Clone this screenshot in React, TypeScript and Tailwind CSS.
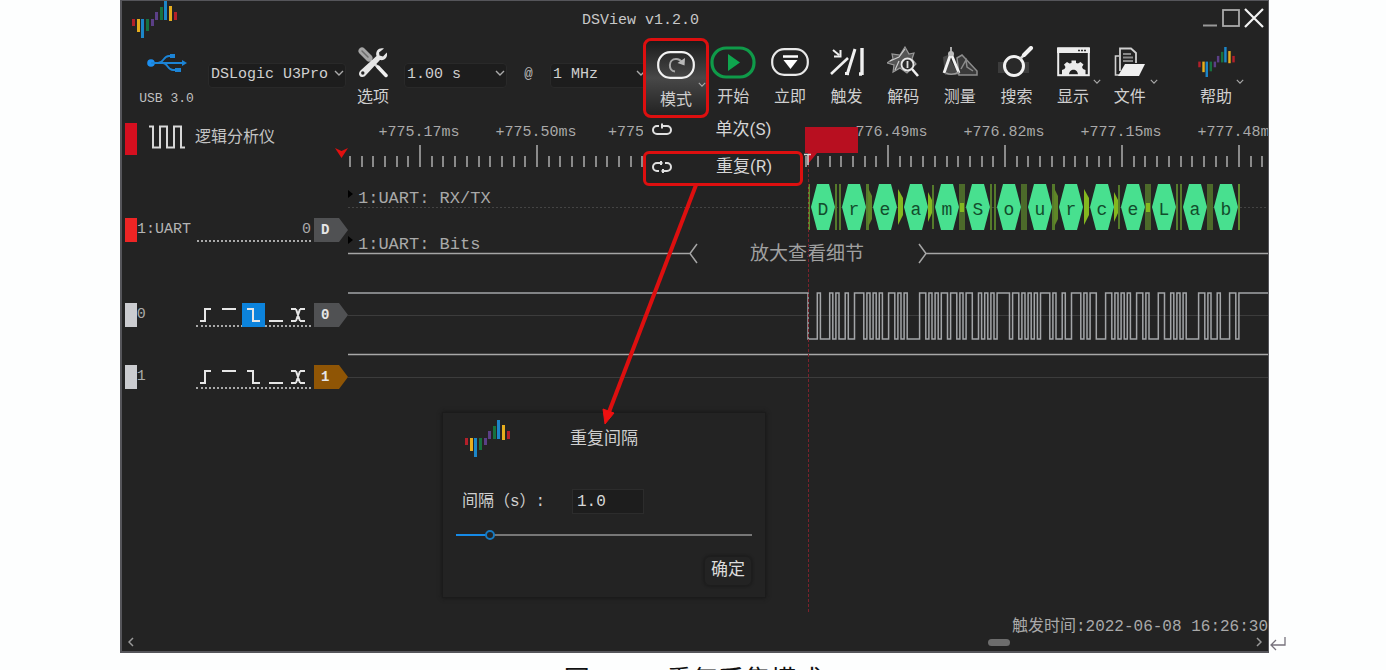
import React, { useState } from "react";

const MONO = "font-['Liberation_Mono','Noto_Sans_CJK_SC',monospace]";

function Logo({ className }: { className: string }) {
  const bars: [number, number, number, string][] = [
    [0, 18, 7, "#b3202a"],
    [5, 18, 13, "#e6ad1e"],
    [9, 18, 19, "#1c86c8"],
    [14, 18, 12, "#17713f"],
    [19, 18, 7, "#5b3f86"],
    [23, 11, 8, "#5b3f86"],
    [28, 6, 13, "#17713f"],
    [32, 0, 19, "#1c86c8"],
    [37, 5, 15, "#e6ad1e"],
    [42, 11, 8, "#b3202a"],
  ];
  return (
    <svg viewBox="0 0 45 37" className={className} aria-hidden="true">
      {bars.map(([x, y, h, c]) => (
        <rect key={x} x={x} y={y} width="3" height={h} fill={c} />
      ))}
    </svg>
  );
}

function Chevron({ className }: { className: string }) {
  return (
    <svg viewBox="0 0 10 6" className={className} fill="none" stroke="#aaa" strokeWidth="1.4" aria-hidden="true">
      <path d="M1 1 5 5 9 1" />
    </svg>
  );
}

function Picker({ label, value, className }: { label: string; value: string; className: string }) {
  return (
    <div className={`relative mt-6 h-[25px] shrink-0 ${className}`}>
      <select
        aria-label={label}
        className="h-full w-full appearance-none rounded-sm border border-[#292929] bg-[#1d1d1d] pl-0.5 text-[15px] text-[#d0d0d0]"
      >
        <option>{value}</option>
      </select>
      <Chevron className="pointer-events-none absolute top-2 right-0.5 h-1.5 w-2.5" />
    </div>
  );
}

function Tool({
  label,
  children,
  menu,
  className = "",
}: {
  label: string;
  children: React.ReactNode;
  menu?: boolean;
  className?: string;
}) {
  return (
    <button type="button" className={`relative flex h-full flex-col items-center pt-1.5 ${className}`}>
      <span className="flex h-9 items-center justify-center">{children}</span>
      <span className="mt-1.5 text-base leading-6 whitespace-nowrap text-[#cfcfcf]">{label}</span>
      {menu && <Chevron className="absolute top-[41px] right-0 h-[5px] w-2" />}
    </button>
  );
}

function UsbIcon() {
  return (
    <svg viewBox="0 0 40 20" className="h-5 w-10" fill="none" stroke="#1c84d6" strokeWidth="1.8" aria-hidden="true">
      <circle cx="4" cy="10" r="3.8" fill="#1c8ff0" stroke="none" />
      <path d="M4 10H35M11 10C17 10 16 3 22 3H25M16 10C21 10 20 17 26 17H29" />
      <path d="m35 7 5 3-5 3z" fill="#1c84d6" stroke="none" />
      <rect x="23" y="1" width="5" height="4" fill="#1c84d6" stroke="none" />
      <rect x="28" y="15" width="6" height="4" fill="#1c84d6" stroke="none" />
    </svg>
  );
}

function ToolsIcon() {
  return (
    <svg viewBox="0 0 30 31" className="h-[31px] w-[30px]" aria-hidden="true">
      <path d="M4 4 11 11" stroke="#a5a5a5" strokeWidth="7" strokeLinecap="round" />
      <path d="M4 4 10 10" stroke="#6d6d6d" strokeWidth="1.5" strokeLinecap="round" />
      <path d="M13 14 21 21" stroke="#d4d4d4" strokeWidth="2.5" />
      <path d="M20 20 28 28.500" stroke="#f0f0f0" strokeWidth="3.500" strokeLinecap="round" />
      <path
        d="M26 1.500C21 0 17 4 18.500 9L2.500 23.500C0 26 1 29 3 29.800 5 30.500 7 29.500 8 28L22 13C27 14 30 10 28.800 5.500L25 9.500 21.500 8.500 21 5.500Z"
        fill="#e6e6e6"
      />
      <circle cx="4.800" cy="26" r="1.700" fill="#232323" />
    </svg>
  );
}

function LoopPill() {
  return (
    <svg viewBox="0 0 38 28" className="h-7 w-[38px]" fill="none" aria-hidden="true">
      <rect x="1.200" y="1.200" width="35.600" height="25.600" rx="12" stroke="#f2f2f2" strokeWidth="2.200" />
      <path d="M18 20.500C11 20 11 8 19 8c3 0 5 1.500 6.500 4" stroke="#a8a8a8" strokeWidth="2" />
      <path d="m28 7-.5 7.500-7-2.500z" fill="#b8b8b8" />
    </svg>
  );
}

function StartIcon() {
  return (
    <svg viewBox="0 0 46 33" className="h-[33px] w-[46px]" fill="none" aria-hidden="true">
      <rect x="2" y="2" width="42" height="29" rx="14" stroke="#0f9a49" strokeWidth="3.200" />
      <path d="M18 8 30 16.500 18 25Z" fill="#0fa54e" />
    </svg>
  );
}

function InstantIcon() {
  return (
    <svg viewBox="0 0 38 28" className="h-7 w-[38px]" fill="none" aria-hidden="true">
      <rect x="1.200" y="1.200" width="35.600" height="25.600" rx="12" stroke="#e8e8e8" strokeWidth="2.200" />
      <path d="M12 8.500H27" stroke="#fff" strokeWidth="2.500" />
      <path d="M12.500 12H26.500L19.500 21Z" fill="#fff" />
    </svg>
  );
}

function TriggerIcon() {
  return (
    <svg viewBox="0 0 34 28" className="h-7 w-[34px]" fill="none" stroke="#f0f0f0" aria-hidden="true">
      <path d="M3 2 9 7M10.500 2V8.500H4" strokeWidth="2" />
      <path d="M1 26 18 10" strokeWidth="2.600" />
      <path d="M17 27 25 1M15 25.500H19" strokeWidth="3" />
      <path d="M32 0V27M29 26H32" strokeWidth="3.400" />
    </svg>
  );
}

function DecodeIcon() {
  return (
    <svg viewBox="0 0 32 32" className="h-8 w-8" fill="none" aria-hidden="true">
      <path d="M18 1 22 8 27 7 25 13 29 18 20 27 13 22 6 26 7 19 0 17 6 13 5 8 13 9Z" fill="#555" stroke="#999" strokeWidth="1.200" />
      <path d="m3 15 9-4 6-8M8 24 12 15" stroke="#ccc" strokeWidth="1.200" />
      <circle cx="20.500" cy="18.500" r="6" fill="#2b2b2b" stroke="#e8e8e8" strokeWidth="1.800" />
      <path d="M20.500 15V22" stroke="#ddd" strokeWidth="1.800" />
      <path d="m25 23 6 7" stroke="#f0f0f0" strokeWidth="2.600" />
    </svg>
  );
}

function MeasureIcon() {
  return (
    <svg viewBox="0 0 36 30" className="h-[30px] w-9" fill="none" aria-hidden="true">
      <path d="M1 10 6 8 17 28H3Z" fill="#484848" />
      <path d="M15 11 20 8 35 24V28H17Z" fill="#3a3a3a" stroke="#8c8c8c" strokeWidth="1.500" />
      <path d="M19 22 24 13 25 20 31 24" stroke="#8c8c8c" strokeWidth="1.500" />
      <path d="M9 0V6" stroke="#ccc" strokeWidth="1.600" />
      <circle cx="9" cy="7" r="3" fill="#bbb" />
      <path d="M8 9 2 26M10 9 17 26" stroke="#f2f2f2" strokeWidth="2.800" />
      <path d="M4 26Q10 29 17 25" stroke="#999" strokeWidth="1.500" />
    </svg>
  );
}

function SearchIcon() {
  return (
    <svg viewBox="0 0 36 32" className="h-8 w-9" fill="none" aria-hidden="true">
      <rect x="0" y="16" width="31" height="11" fill="#3c3c3c" />
      <circle cx="16" cy="20" r="9.500" fill="#292929" stroke="#f2f2f2" strokeWidth="3" />
      <path d="m22 13 4-4" stroke="#ddd" strokeWidth="2.500" />
      <path d="m26 9 7-7" stroke="#f2f2f2" strokeWidth="4" strokeLinecap="round" />
    </svg>
  );
}

function DisplayIcon() {
  return (
    <svg viewBox="0 0 33 30" className="h-[30px] w-[33px]" fill="none" aria-hidden="true">
      <rect x="1.200" y="1.200" width="30.600" height="27" stroke="#ececec" strokeWidth="2" />
      <path d="M0 1H33V6H0Z" fill="#ececec" />
      <path d="M21 3.500H30" stroke="#333" strokeWidth="1.500" strokeDasharray="2 1" />
      <path
        d="M5 28V23L7.500 22 8.500 20 7 17.500 10 15 12.500 16.500 14.500 16V13.500H19V16L21 16.500 23.500 15 26.500 17.500 25 20 26 22 28.500 23V28H21C21 21 12 21 12 28Z"
        fill="#ececec"
      />
    </svg>
  );
}

function FileIcon() {
  return (
    <svg viewBox="0 0 32 30" className="h-[30px] w-8" fill="none" aria-hidden="true">
      <path d="M5 9H1.500V28H5" stroke="#d0d0d0" strokeWidth="1.600" />
      <path d="M6 24V1.500H17L22 6V16" stroke="#d0d0d0" strokeWidth="1.800" />
      <path d="M9 7H17M9 10.500H19M9 14H19" stroke="#888" strokeWidth="2" />
      <path d="M11 17H31L25 29H4Z" fill="#f0f0f0" />
    </svg>
  );
}

function RunOnceIcon({ repeat }: { repeat?: boolean }) {
  return (
    <svg viewBox="0 0 20 14" className="h-3.5 w-5" fill="none" stroke="#e0e0e0" strokeWidth="2" aria-hidden="true">
      {repeat ? (
        <path d="M8 3H5a4 4 0 0 0 0 8h2M12 11h3a4 4 0 0 0 0-8h-2M8 3h2.500M9.500 11H12M9 1v4M11 9v4" />
      ) : (
        <path d="M7 3H5a4 4 0 0 0 0 8h10a4 4 0 0 0 0-8H10M10 0.500v5" />
      )}
    </svg>
  );
}

/* ---------- traces ---------- */

const MESSAGE = "DreamSourceLab";
const START_X = 460;
const FRAME = 31;
const BIT = FRAME / 10;

function uartPath(high: number, low: number) {
  let d = `M0 ${high}H${START_X}`;
  let level = 1;
  MESSAGE.split("").forEach((ch, i) => {
    const code = ch.charCodeAt(0);
    const bits = [0];
    for (let b = 0; b < 8; b++) bits.push((code >> b) & 1);
    bits.push(1);
    bits.forEach((bit, b) => {
      if (bit !== level) {
        d += `H${(START_X + i * FRAME + b * BIT).toFixed(1)}V${bit ? high : low}`;
        level = bit;
      }
    });
  });
  return `${d}H4000`;
}

function Ruler() {
  const labels: [number, string][] = [
    [0, "+775.17ms"],
    [1, "+775.50ms"],
    [4, "+776.49ms"],
    [5, "+776.82ms"],
    [6, "+777.15ms"],
    [7, "+777.48ms"],
  ];
  const ticks = Array.from({ length: 180 }, (_, i) => i - 6);
  return (
    <svg className="h-full w-full" aria-label="time ruler">
      {labels.map(([i, t]) => (
        <text key={t} x={71 + i * 117} y="18" textAnchor="middle" fontSize="15" fill="#a9a9a9">
          {t}
        </text>
      ))}
      <text x="260" y="18" fontSize="15" fill="#a9a9a9">+775</text>
      {ticks.map((k) => (
        <rect key={k} x={Math.round(71 + k * 11.7)} y={k % 10 === 0 ? 27 : 38} width="2" height={k % 10 === 0 ? 22 : 11} fill="#8b8b8b" />
      ))}
    </svg>
  );
}

type Gap = "bars" | "block" | "taper" | "taperBar" | "barTaper" | "lit";
const GAPS: Gap[] = ["bars", "barTaper", "taper", "taperBar", "lit", "bars", "block", "barTaper", "taper", "taperBar", "lit", "bars", "block"];

function GapMark({ kind, x }: { kind: Gap; x: number }) {
  switch (kind) {
    case "bars":
      return <path d={`M${x} 6h2v46h-2zM${x + 4} 6h2v46h-2z`} fill="#557a2b" />;
    case "block":
      return <rect x={x} y="6" width="6" height="46" fill="#4c6a2a" />;
    case "taper":
      return <path d={`M${x + 1} 11 ${x + 6} 20V37L${x + 1} 47Z`} fill="#84b81f" />;
    case "taperBar":
      return (
        <g>
          <path d={`M${x} 14 ${x + 4} 22V35L${x} 44Z`} fill="#84b81f" />
          <rect x={x + 4} y="7" width="2" height="44" fill="#557a2b" />
        </g>
      );
    case "barTaper":
      return (
        <g>
          <rect x={x} y="6" width="3" height="46" fill="#557a2b" />
          <path d={`M${x + 2} 10 ${x + 6} 18V41L${x + 2} 49Z`} fill="#5f8527" />
        </g>
      );
    case "lit":
      return (
        <g>
          <rect x={x} y="6" width="6" height="46" fill="#4c6a2a" />
          <rect x={x + 1} y="25" width="4" height="9" fill="#84b81f" />
        </g>
      );
  }
}

function DecoderTrace() {
  return (
    <svg className="h-full w-full" aria-label="UART decoder">
      <path d="M0 12 5 16 0 20ZM0 58 5 62 0 66Z" fill="#000" />
      <line x1="0" x2="100%" y1="29.500" y2="29.500" stroke="#444" strokeDasharray="2 2" />
      <text x="10" y="25" fontSize="17" fill="#a9a9a9">1:UART: RX/TX</text>
      <text x="10" y="71" fontSize="17" fill="#a9a9a9">1:UART: Bits</text>
      <path d="M0 75.500H342M349 66 342 75.500 349 85M571 66 578 75.500 571 85M578 75.500H4000" fill="none" stroke="#a5a5a5" strokeWidth="1.500" />
      <text x="459" y="82" fontSize="19" textAnchor="middle" fill="#a0a0a0">放大查看细节</text>
      <rect x="460" y="6" width="2" height="46" fill="#5f8a2e" />
      {MESSAGE.split("").map((ch, i) => {
        const c = 475 + i * FRAME;
        return (
          <g key={i}>
            <path d={`M${c - 12} 29 ${c - 6} 6H${c + 6}L${c + 12} 29 ${c + 6} 52H${c - 6}Z`} fill="#48e08f" />
            {i < GAPS.length ? <GapMark kind={GAPS[i]} x={c + 12} /> : <rect x={c + 12} y="6" width="2" height="46" fill="#5f8a2e" />}
            <text x={c} y="37" fontSize="18" textAnchor="middle" fill="#124d2c" className="font-['Liberation_Mono',monospace]">
              {ch}
            </text>
          </g>
        );
      })}
    </svg>
  );
}

function Tag({ text, color }: { text: string; color: string }) {
  return (
    <span className="relative flex h-6 w-[34px] shrink-0 items-center pl-[7px]">
      <svg viewBox="0 0 34 24" className="absolute inset-0 h-6 w-[34px]" aria-hidden="true">
        <path d="M0 0H25L34 12 25 24H0Z" fill={color} />
      </svg>
      <span className="relative text-sm font-bold text-[#e6e6e6]">{text}</span>
    </span>
  );
}

const EDGES: [string, string][] = [
  ["上升沿", "M4 18H9V6H15"],
  ["高电平", "M3 6H17"],
  ["下降沿", "M5 6H11V18H18"],
  ["低电平", "M4 18H18"],
  ["双边沿", "M3 6H8M12 6H17M3 18H8M12 18H17M8 6 12 18M12 6 8 18"],
];

function ChannelHead({ name, tag, color, initial }: { name: string; tag: string; color: string; initial: number }) {
  const [active, setActive] = useState(initial);
  return (
    <div className="flex w-[226px] shrink-0 items-center pl-[3px]">
      <span className="h-6 w-3 bg-[#cbccd0]" />
      <span className="w-[60px] text-[15px] text-[#a9a9a9]">{name}</span>
      <div className="mr-[3px] flex h-6 w-[115px] border-b-2 border-dotted border-[#a9a9a9]">
        {EDGES.map(([label, d], i) => (
          <button
            key={label}
            type="button"
            aria-label={label}
            onClick={() => setActive(i)}
            className={`h-6 w-[23px] ${active === i ? "bg-[#0c83dc]" : ""}`}
          >
            <svg viewBox="0 0 23 24" className="h-6 w-[23px]" fill="none" stroke="#e6e6e6" strokeWidth="2">
              <path d={d} />
            </svg>
          </button>
        ))}
      </div>
      <Tag text={tag} color={color} />
    </div>
  );
}

function RepeatDialog() {
  const [value, setValue] = useState("1.0");
  return (
    <section
      aria-label="重复间隔"
      className="absolute top-[294px] left-80 flex h-[186px] w-[324px] flex-col border border-[#1b1b1b] bg-[#232323] px-[13px] shadow-[0_0_4px_#161616]"
    >
      <header className="flex h-[58px] pt-[7px] pl-[9px]">
        <Logo className="h-[37px] w-[45px]" />
        <h2 className="ml-[60px] pt-2 text-[17px] leading-6 text-[#cfcfcf]">重复间隔</h2>
      </header>
      <div className="mt-[17px] flex items-center pl-1.5">
        <label htmlFor="interval" className="w-[110px] pt-0.5 text-base whitespace-nowrap text-[#cfcfcf]">
          间隔（s）:
        </label>
        <input
          id="interval"
          value={value}
          onChange={(e) => setValue(e.target.value)}
          className="h-[25px] w-[72px] border border-[#2c2c2c] bg-[#1d1d1d] px-1 pt-0.5 text-base text-[#d8d8d8]"
        />
      </div>
      <input
        type="range"
        aria-label="间隔"
        min="0"
        max="10"
        step="0.1"
        value={Number(value) || 0}
        onChange={(e) => setValue(Number(e.target.value).toFixed(1))}
        className="mt-5 h-0.5 w-full appearance-none bg-[linear-gradient(to_right,#168ae6_11%,#777_11%)] [&::-webkit-slider-thumb]:h-2.5 [&::-webkit-slider-thumb]:w-2.5 [&::-webkit-slider-thumb]:appearance-none [&::-webkit-slider-thumb]:rounded-full [&::-webkit-slider-thumb]:border-2 [&::-webkit-slider-thumb]:border-[#1779c0] [&::-webkit-slider-thumb]:bg-[#232323]"
      />
      <button
        type="button"
        className="mt-5 ml-auto h-[30px] w-[48px] rounded-md border border-[#1d1d1d] text-[17px] leading-6 text-[#dcdcdc] shadow-[0_0_3px_#151515]"
      >
        确定
      </button>
    </section>
  );
}

function ModeMenu() {
  return (
    <ul className="absolute top-full left-0 z-10 flex w-[160px] flex-col bg-[#232323] text-[17px] text-[#d6d6d6]">
      <li className="flex h-[33px] items-center">
        <button type="button" className="flex h-full w-full items-center pb-[9px] pl-[9px]">
          <RunOnceIcon />
          <span className="flex-1 pl-3 text-center font-['Roboto','Noto_Sans_CJK_SC',sans-serif]">单次(S)</span>
        </button>
      </li>
      <li className="h-[35px] rounded-md border-3 border-[#dd0f0f]">
        <button type="button" className="flex h-full w-full items-center pb-1 pl-1.5">
          <RunOnceIcon repeat />
          <span className="flex-1 pl-4 text-center font-['Roboto','Noto_Sans_CJK_SC',sans-serif]">重复(R)</span>
        </button>
      </li>
    </ul>
  );
}

export default function App() {
  return (
    <div className={`flex h-screen flex-col overflow-hidden bg-[#fdfefe] ${MONO}`}>
      <div className="flex min-h-0 flex-1">
        <div className="w-[120px] shrink-0" />
        <main className="relative flex min-w-0 flex-1 flex-col border-t border-r border-b-2 border-l-2 border-[#55555a] bg-[#232323]">
          <header className="flex h-[37px] shrink-0">
            <Logo className="ml-2.5 h-[37px] w-[45px]" />
            <h1 className="flex-1 pt-2 pr-[98px] text-center text-[15px] leading-6 text-[#c8c8c8]">DSView v1.2.0</h1>
            <div className="flex w-[66px] items-start gap-1 pt-[7px]">
              <button type="button" aria-label="最小化">
                <svg viewBox="0 0 16 20" className="h-5 w-4"><path d="M1 17.500H15" stroke="#999" strokeWidth="2" /></svg>
              </button>
              <button type="button" aria-label="最大化">
                <svg viewBox="0 0 18 20" className="h-5 w-[18px]"><rect x="1" y="2" width="16" height="16" fill="none" stroke="#aaa" strokeWidth="1.800" /></svg>
              </button>
              <button type="button" aria-label="关闭">
                <svg viewBox="0 0 20 20" className="h-5 w-5"><path d="M1 1 19 19M19 1 1 19" stroke="#f4f4f4" strokeWidth="2.200" /></svg>
              </button>
            </div>
          </header>

          <nav className="relative z-10 flex h-20 shrink-0">
            <div className="mr-[5px] ml-2 flex w-[73px] shrink-0 flex-col items-center pt-[15px]">
              <UsbIcon />
              <span className="mt-3.5 text-[13px] leading-6 text-[#c0c0c0]">USB 3.0</span>
            </div>
            <Picker label="设备" value="DSLogic U3Pro" className="w-[138px]" />
            <Tool label="选项" className="mx-[3px] w-12 shrink-0">
              <ToolsIcon />
            </Tool>
            <Picker label="采样时长" value="1.00 s" className="ml-1 w-[103px]" />
            <span className="w-[43px] shrink-0 pt-[26px] text-center text-sm text-[#b8b8b8]">@</span>
            <Picker label="采样频率" value="1 MHz" className="w-[98px]" />
            <div className="relative -ml-[5px] w-[66px] shrink-0">
              <Tool
                label="模式"
                menu
                className="w-full rounded-lg border-3 border-[#dd0f0f] bg-linear-to-b from-[#1c1c1c] via-[#484848] to-[#232323]"
              >
                <LoopPill />
              </Tool>
              <ModeMenu />
            </div>
            <div className="-ml-1 grid w-[453px] shrink-0 grid-cols-8">
              <Tool label="开始"><StartIcon /></Tool>
              <Tool label="立即"><InstantIcon /></Tool>
              <Tool label="触发"><TriggerIcon /></Tool>
              <Tool label="解码"><DecodeIcon /></Tool>
              <Tool label="测量"><MeasureIcon /></Tool>
              <Tool label="搜索"><SearchIcon /></Tool>
              <Tool label="显示" menu><DisplayIcon /></Tool>
              <Tool label="文件" menu><FileIcon /></Tool>
            </div>
            <Tool label="帮助" menu className="mr-6 ml-auto w-14">
              <Logo className="h-[30px] w-[37px]" />
            </Tool>
          </nav>

          <div className="relative flex min-h-0 flex-1 flex-col">
            <div className="flex h-[60px] shrink-0">
              <div className="relative flex w-[226px] shrink-0 items-start pl-[3px]">
                <span className="mt-[5px] h-8 w-3 bg-[#d50f1f]" />
                <svg viewBox="0 0 36 24" className="mt-[7px] ml-3 h-6 w-9" fill="none" stroke="#d8d8d8" strokeWidth="2" aria-hidden="true">
                  <path d="M0 1.500H4V22.500H11V1.500H18V22.500H25V1.500H32V22.500H36" />
                </svg>
                <span className="mt-2 ml-2.5 text-base leading-6 text-[#c4c4c4]">逻辑分析仪</span>
                <svg viewBox="0 0 13 10" className="absolute right-0 bottom-5 h-2.5 w-[13px]" aria-hidden="true">
                  <path d="M0 0 6.500 3 13 0 6.500 10Z" fill="#e01010" />
                </svg>
              </div>
              <div className="min-w-0 flex-1"><Ruler /></div>
            </div>

            <div className="flex h-[104px] shrink-0">
              <div className="flex w-[226px] shrink-0 items-center pl-[3px]">
                <span className="h-6 w-3 bg-[#ee2525]" />
                <span className="w-[60px] text-[15px] text-[#b4b4b4]">1:UART</span>
                <span className="mr-[3px] h-6 w-[115px] border-b-2 border-dotted border-[#a9a9a9] text-right text-[15px] leading-6 text-[#a9a9a9]">0</span>
                <Tag text="D" color="#505153" />
              </div>
              <div className="min-w-0 flex-1"><DecoderTrace /></div>
            </div>

            <div className="flex h-[66px] shrink-0">
              <ChannelHead name="0" tag="0" color="#505153" initial={2} />
              <div className="min-w-0 flex-1">
                <svg className="h-full w-full" aria-label="channel 0">
                  <line x1="0" x2="100%" y1="33.500" y2="33.500" stroke="#3c3c3c" />
                  <path d={uartPath(11, 57)} fill="none" stroke="#a3a5a8" strokeWidth="1.500" />
                </svg>
              </div>
            </div>

            <div className="flex h-[58px] shrink-0">
              <ChannelHead name="1" tag="1" color="#8f5505" initial={-1} />
              <div className="min-w-0 flex-1">
                <svg className="h-full w-full" aria-label="channel 1">
                  <line x1="0" x2="100%" y1="6.500" y2="6.500" stroke="#a8a8a8" strokeWidth="1.500" />
                  <line x1="0" x2="100%" y1="29.500" y2="29.500" stroke="#3c3c3c" />
                </svg>
              </div>
            </div>

            <p className="mt-auto shrink-0 text-right text-base leading-3 text-[#a9a9a9]">触发时间:2022-06-08 16:26:30</p>

            <svg className="pointer-events-none absolute top-0 left-[680px] h-[496px] w-16" aria-hidden="true">
              <line x1="6.500" x2="6.500" y1="36" y2="496" stroke="#7c222c" strokeDasharray="3 2" />
              <rect x="3" y="9" width="53" height="26" fill="#b80f20" />
              <path d="M6 46V35H15Z" fill="#c01020" />
              <path d="M2 36.500H9M6 37V47" stroke="#d8d8d8" strokeWidth="1.500" fill="none" />
            </svg>

            <RepeatDialog />
          </div>

          <footer className="flex h-[18px] shrink-0 items-center px-1.5">
            <svg viewBox="0 0 6 10" className="h-2.5 w-1.5" fill="none" stroke="#999" strokeWidth="1.500"><path d="M5 1 1 5 5 9" /></svg>
            <div className="mx-2 flex-1 pr-[238px]">
              <div className="ml-auto h-[7px] w-[22px] rounded-full bg-[#6d6d6d]" />
            </div>
            <svg viewBox="0 0 6 10" className="h-2.5 w-1.5" fill="none" stroke="#999" strokeWidth="1.500"><path d="M1 1 5 5 1 9" /></svg>
          </footer>

          <svg className="pointer-events-none absolute top-0 left-0 z-20 h-[430px] w-[640px]" aria-hidden="true">
            <path d="M574 184 487 411" stroke="#dd0f0f" strokeWidth="4" />
            <path d="M483 423 481 408 492 412Z" fill="#f01010" stroke="#f01010" />
          </svg>
        </main>
        <div className="flex w-[117px] shrink-0 items-end">
          <svg viewBox="0 0 18 18" className="h-[18px] w-[18px]" fill="none" stroke="#77727c" strokeWidth="1.300" aria-hidden="true">
            <path d="M16 2V10H2M7 5 2 10 7 15" />
          </svg>
        </div>
      </div>
      <p className="flex h-[17px] shrink-0 justify-center gap-5 overflow-hidden pt-2.5 text-[26px] leading-9 text-[#111] font-['Liberation_Serif','Noto_Sans_CJK_SC',serif]">
        <span>图</span>
        <span className="text-xl leading-10">2-12</span>
        <span>重复采集模式</span>
      </p>
    </div>
  );
}
